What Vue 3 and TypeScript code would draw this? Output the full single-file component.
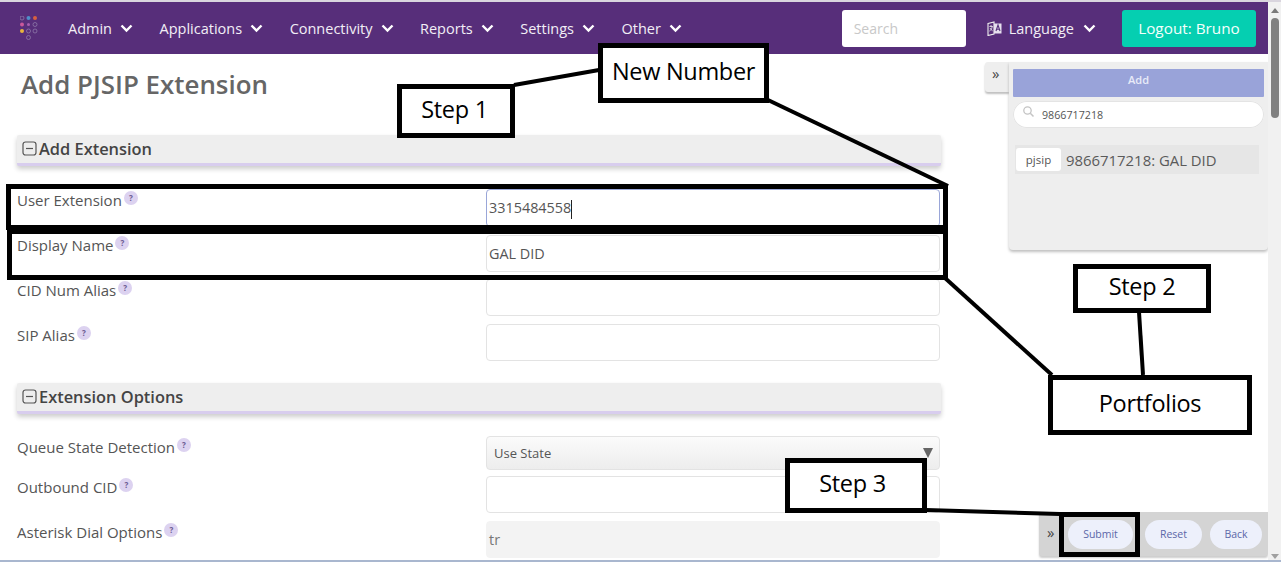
<script setup lang="ts">
const menu: string[] = ['Admin', 'Applications', 'Connectivity', 'Reports', 'Settings', 'Other']
type Field = { label: string; value?: string; kind?: string; cls?: string }
const first: Field[] = [
  { label: 'User Extension', value: '3315484558', kind: 'focus' },
  { label: 'Display Name', value: 'GAL DID' },
  { label: 'CID Num Alias' },
  { label: 'SIP Alias' }
]
const second: Field[] = [
  { label: 'Queue State Detection', value: 'Use State', kind: 'select', cls: 'queue' },
  { label: 'Outbound CID', cls: 'outbound' },
  { label: 'Asterisk Dial Options', value: 'tr', kind: 'disabled', cls: 'dial' }
]
const logoDots = [
  { x: 2, y: 2, f: 'none', s: '#8d78a8' }, { x: 8.5, y: 2, f: '#4f8fc9', s: 'none' }, { x: 15, y: 2, f: '#d9603f', s: 'none' },
  { x: 2, y: 8.5, f: '#c9589b', s: 'none' }, { x: 8.5, y: 8.5, f: '#a560b0', s: 'none', r: 1.5 }, { x: 15, y: 8.5, f: 'none', s: '#8d78a8' },
  { x: 2, y: 15, f: '#e8b43c', s: 'none' }, { x: 8.5, y: 15, f: 'none', s: '#8d78a8' }, { x: 15, y: 15, f: 'none', s: '#8d78a8' },
  { x: 8.5, y: 21.5, f: 'none', s: '#8d78a8' }
]
</script>

<template>
  <div class="screen">
    <div class="page">
      <header class="nav">
        <svg class="logo" width="18" height="24" viewBox="0 0 18 24">
          <circle v-for="(d, i) in logoDots" :key="i" :cx="d.x" :cy="d.y" :r="d.r ?? 2" :fill="d.f" :stroke="d.s" stroke-width="0.8" />
        </svg>
        <nav class="menu">
          <a v-for="m in menu" :key="m" class="menu-item">
            {{ m }}
            <svg class="chev" width="13" height="9" viewBox="0 0 13 9"><path d="M1.5 1.5 6.5 6.5 11.5 1.5" fill="none" stroke="#fff" stroke-width="2.4" /></svg>
          </a>
        </nav>
        <div class="nav-right">
          <div class="search">Search</div>
          <a class="lang">
            <svg class="lang-icon" width="15" height="15" viewBox="0 0 15 15">
              <path d="M1 2.5 7 1v12l-6 1.5z" fill="none" stroke="#eee" stroke-width="1.1" />
              <path d="M7 2.5h7.5v10H7z" fill="#e6e0ee" />
              <path d="M9 10l2-6 2 6M9.8 8.2h2.4" fill="none" stroke="#55307c" stroke-width="1.1" />
              <path d="M2.4 5.5h3.4M4 4v1.5M5.2 5.5c-.3 2.4-1.4 3.8-2.8 4.6M3 7c.6 1.3 1.5 2.2 2.6 2.8" fill="none" stroke="#eee" stroke-width=".8" />
            </svg>
            Language
            <svg class="chev" width="13" height="9" viewBox="0 0 13 9"><path d="M1.5 1.5 6.5 6.5 11.5 1.5" fill="none" stroke="#fff" stroke-width="2.4" /></svg>
          </a>
          <button class="logout">Logout: Bruno</button>
        </div>
      </header>

      <div class="body">
        <main class="form">
          <h1>Add PJSIP Extension</h1>

          <div class="section">
            <svg width="15" height="15" viewBox="0 0 15 15"><rect x="1" y="1" width="13" height="13" rx="2.5" fill="none" stroke="#555" stroke-width="1.2" /><path d="M4 7.5h7" stroke="#555" stroke-width="1.2" /></svg>
            Add Extension
          </div>
          <div class="rows">
            <div v-for="f in first" :key="f.label" class="row">
              <label>{{ f.label }}<i class="help">?</i></label>
              <div class="input" :class="f.kind">{{ f.value }}<span v-if="f.kind === 'focus'" class="caret"></span></div>
            </div>
          </div>

          <div class="section second">
            <svg width="15" height="15" viewBox="0 0 15 15"><rect x="1" y="1" width="13" height="13" rx="2.5" fill="none" stroke="#555" stroke-width="1.2" /><path d="M4 7.5h7" stroke="#555" stroke-width="1.2" /></svg>
            Extension Options
          </div>
          <div class="rows2">
            <div v-for="f in second" :key="f.label" class="row" :class="f.cls">
              <label>{{ f.label }}<i class="help">?</i></label>
              <div class="input" :class="f.kind">{{ f.value }}<span v-if="f.kind === 'select'" class="arrow"></span></div>
            </div>
          </div>
        </main>

        <aside class="side">
          <div class="panel">
            <div class="tab">»</div>
            <div class="panel-main">
              <div class="add">Add</div>
              <div class="pill">
                <svg width="13" height="13" viewBox="0 0 13 13"><circle cx="5.5" cy="5.5" r="3.7" fill="none" stroke="#c4c4c4" stroke-width="1.3" /><path d="M8.3 8.3 11.5 11.5" stroke="#c4c4c4" stroke-width="1.5" /></svg>
                <span>9866717218</span>
              </div>
              <div class="result">
                <span class="tag">pjsip</span>
                <span class="result-text">9866717218: GAL DID</span>
              </div>
            </div>
          </div>
          <div class="actions">
            <span class="act-tab">»</span>
            <button class="act submit">Submit</button>
            <button class="act reset">Reset</button>
            <button class="act back">Back</button>
          </div>
        </aside>
      </div>
    </div>

    <div class="scrollbar">
      <span class="up"></span>
      <span class="thumb"></span>
      <span class="down"></span>
    </div>

    <!-- annotation layer -->
    <svg class="lines" width="1281" height="562" viewBox="0 0 1281 562">
      <g fill="none" stroke="#000" stroke-width="4">
        <path d="M514 85 599 70" />
        <path d="M768 100 948 186" />
        <path d="M945 278 1052 375" />
        <path d="M1139 312 1143 375" />
        <path d="M926 510 1060 514" />
      </g>
    </svg>
    <div class="note n1">Step 1</div>
    <div class="note n2">New Number</div>
    <div class="note n3">Step 2</div>
    <div class="note n4">Portfolios</div>
    <div class="note n5">Step 3</div>
    <div class="frame f1"></div>
    <div class="frame f2"></div>
    <div class="frame f3"></div>
  </div>
</template>

<style>
html, body { margin: 0; background: #fff; overflow: hidden; }
</style>

<style scoped>
.screen {
  position: relative;
  display: flex;
  width: 1281px;
  height: 562px;
  overflow: hidden;
  box-sizing: border-box;
  border-top: 2px solid #d9d5de;
  border-bottom: 2px solid #a9b7cf;
  background: #fff;
  font-family: "Open Sans", "Noto Sans", sans-serif;
  color: #555;
}
.page { width: 1268px; flex: none; display: flex; flex-direction: column; }
.nav {
  display: flex;
  align-items: center;
  height: 52px;
  flex: none;
  background: #572e7a;
  color: #f2eef6;
  font-size: 14.5px;
}
.logo { margin-left: 20px; flex: none; }
.menu { display: flex; margin-left: 30px; gap: 26.5px; }
.menu-item { display: flex; align-items: center; gap: 8px; white-space: nowrap; }
.nav-right { display: flex; align-items: center; margin-left: auto; margin-right: 12px; }
.search {
  box-sizing: border-box;
  width: 124px;
  height: 37px;
  line-height: 37px;
  padding-left: 12px;
  border-radius: 3px;
  background: #fff;
  color: #c8c8c8;
  font-size: 14px;
}
.lang { display: flex; align-items: center; margin-left: 21px; white-space: nowrap; }
.lang-icon { margin-right: 7px; }
.lang .chev { margin-left: 9px; }
.logout {
  margin-left: 26px;
  width: 134px;
  height: 37px;
  border: 0;
  border-radius: 3px;
  background: #05cfb1;
  color: #f4fffc;
  font: 500 15.3px "Open Sans", sans-serif;
}
.body { display: flex; flex: 1; min-height: 0; }
.form { width: 924px; margin-left: 17px; flex: none; }
h1 {
  margin: 0;
  height: 81px;
  padding-left: 4px;
  line-height: 60px;
  font-size: 25.9px;
  font-weight: 600;
  color: #666;
  white-space: nowrap;
}
.section {
  display: flex;
  align-items: center;
  gap: 2px;
  box-sizing: border-box;
  height: 31px;
  padding-left: 5px;
  padding-bottom: 1px;
  background: #eee;
  border-bottom: 3px solid #d8cdee;
  border-radius: 2px;
  box-shadow: 0 3px 5px rgba(0, 0, 0, .2);
  color: #444;
  font-size: 16.4px;
  font-weight: 600;
}
.rows { display: grid; grid-template-rows: 38px 36px 37px 37px; row-gap: 8px; margin-top: 23px; }
.second { margin-top: 22px; }
.rows2 { margin-top: 22px; }
.row { display: grid; grid-template-columns: 469px 454px; }
.rows2 .row { height: 37px; margin-bottom: 6px; }
.rows2 .queue { height: 34px; }
.rows2 .outbound { margin-bottom: 8px; }
label { font-size: 15px; line-height: 19px; white-space: nowrap; color: #555; display: flex; align-items: flex-start; }
.rows .row:nth-child(1) label { margin-top: 2px; }
.rows .row:nth-child(2) label { margin-top: 1px; }
.rows .row:nth-child(3) label, .rows .row:nth-child(4) label { margin-top: 2px; }
.queue label { margin-top: 2px; }
.outbound label { margin-top: 2px; }
.dial label { margin-top: 2px; }
.help {
  display: inline-block;
  width: 14px;
  height: 14px;
  margin-left: 2px;
  margin-top: 0;
  border-radius: 50%;
  background: #dcd2f0;
  color: #6a5a90;
  font: 700 8px/14px "Open Sans", sans-serif;
  text-align: center;
}
.input {
  position: relative;
  box-sizing: border-box;
  padding-left: 2px;
  border: 1px solid #e3e3e3;
  border-radius: 4px;
  background: #fff;
  font-size: 14.4px;
  line-height: 35px;
  color: #555;
}
.focus { border-color: #9aa6d8; }
.caret { display: inline-block; width: 1px; height: 19px; background: #222; vertical-align: middle; }
.select {
  padding-left: 7px;
  font-size: 13px;
  line-height: 32px;
  background: linear-gradient(#fbfbfb, #ededed);
}
.arrow {
  position: absolute;
  right: 6px;
  top: 11px;
  width: 0;
  height: 0;
  border-left: 5px solid transparent;
  border-right: 5px solid transparent;
  border-top: 10px solid #666;
}
.disabled { padding-left: 2px; border-color: #f3f3f3; background: #f3f3f3; color: #777; }
.side { flex: 1; position: relative; }
.panel { position: absolute; left: 44px; top: 8px; right: 0; height: 188px; display: flex; }
.tab {
  box-sizing: border-box;
  width: 24px;
  height: 30px;
  padding-left: 7px;
  background: #eee;
  border-radius: 3px 0 0 3px;
  box-shadow: 0 2px 2px rgba(0, 0, 0, .25);
  color: #444;
  font-size: 15px;
  line-height: 22px;
}
.panel-main {
  flex: 1;
  background: #eee;
  border-radius: 0 0 4px 4px;
  box-shadow: 0 2px 3px rgba(0, 0, 0, .25);
  padding: 7px 4px 0 4px;
}
.add {
  height: 28px;
  background: #99a3d9;
  color: #e8ebf8;
  font-size: 11px;
  font-weight: 600;
  line-height: 22px;
  text-align: center;
  border-radius: 1px;
}
.pill {
  display: flex;
  align-items: center;
  box-sizing: border-box;
  height: 27px;
  margin-top: 4px;
  padding-left: 9px;
  border-radius: 14px;
  background: #fff;
  box-shadow: inset 0 0 0 1px #e4e4e4;
  font-size: 10.7px;
  color: #555;
}
.pill svg { margin-top: -6px; margin-right: 7px; }
.result {
  display: flex;
  align-items: center;
  height: 29px;
  margin: 17px 5px 0 2px;
  padding-left: 1px;
  background: #e6e6e6;
}
.tag {
  box-sizing: border-box;
  width: 45px;
  height: 23px;
  margin-right: 5px;
  border-radius: 3px;
  background: #fff;
  font-size: 11.5px;
  line-height: 23px;
  text-align: center;
  color: #555;
}
.result-text { font-size: 14.9px; color: #5a5a5a; white-space: nowrap; }
.actions {
  position: absolute;
  left: 98px;
  right: 0;
  bottom: 4px;
  box-sizing: border-box;
  height: 44px;
  display: flex;
  align-items: center;
  background: #d4d4d4;
  border-radius: 0 0 3px 3px;
  box-shadow: 0 2px 2px rgba(0, 0, 0, .2);
}
.act-tab { width: 29px; padding-left: 8px; box-sizing: border-box; font-size: 15px; color: #444; margin-top: -5px; flex: none; }
.act {
  height: 29px;
  border: 0;
  border-radius: 15px;
  background: #edf0fb;
  color: #5c67a8;
  font: 10.5px "Open Sans", sans-serif;
  padding: 0;
}
.submit { width: 65px; }
.reset { width: 57px; margin-left: 12px; }
.back { width: 52px; margin-left: 8px; }
.scrollbar { position: relative; flex: 1; background: #f1f1f1; }
.thumb {
  position: absolute;
  left: 3px;
  top: 16px;
  width: 8px;
  height: 100px;
  border-radius: 4px;
  background: #808080;
}
.up, .down {
  position: absolute;
  left: 3px;
  width: 0;
  height: 0;
  border-left: 4px solid transparent;
  border-right: 4px solid transparent;
}
.up { top: 6px; border-bottom: 5px solid #7a7a7a; }
.down { bottom: 1px; border-top: 5px solid #a0a0a0; }
.lines { position: absolute; left: 0; top: -2px; pointer-events: none; }
.note {
  position: absolute;
  box-sizing: border-box;
  display: flex;
  align-items: center;
  justify-content: center;
  padding-bottom: 5px;
  border: 5px solid #000;
  background: #fff;
  color: #000;
  font-size: 23.5px;
  font-family: "Open Sans", sans-serif;
  letter-spacing: -.3px;
  white-space: nowrap;
}
.n1 { left: 397px; top: 82px; width: 118px; height: 54px; padding-right: 3px; }
.n2 { left: 598px; top: 41px; width: 171px; height: 60px; }
.n3 { left: 1073px; top: 262px; width: 138px; height: 49px; }
.n4 { left: 1048px; top: 373px; width: 204px; height: 60px; }
.n5 { left: 785px; top: 456px; width: 142px; height: 55px; padding-right: 7px; }
.frame { position: absolute; box-sizing: border-box; border: 5px solid #000; pointer-events: none; }
.f1 { left: 6px; top: 182px; width: 942px; height: 46px; }
.f2 { left: 7px; top: 227px; width: 941px; height: 51px; }
.f3 { left: 1059px; top: 510px; width: 81px; height: 45px; }
</style>
